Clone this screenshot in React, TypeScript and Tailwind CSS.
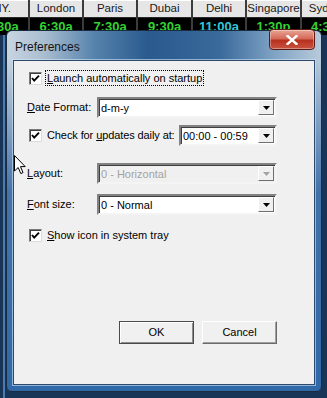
import React from 'react';

interface City {
  name: string;
  time: string;
  tone: 'green' | 'cyan';
  width: number;
}

const CITIES: City[] = [
  { name: 'NY.', time: '1:30a', tone: 'green', width: 52 },
  { name: 'London', time: '6:30a', tone: 'green', width: 52 },
  { name: 'Paris', time: '7:30a', tone: 'green', width: 52 },
  { name: 'Dubai', time: '9:30a', tone: 'green', width: 53 },
  { name: 'Delhi', time: '11:00a', tone: 'cyan', width: 52 },
  { name: 'Singapore', time: '1:30p', tone: 'green', width: 53 },
  { name: 'Sydney', time: '4:30p', tone: 'green', width: 52 },
];

const CheckBox: React.FC = () => (
  <span className="w-[13px] h-[13px] shrink-0 bg-white border border-t-[#7a7a7a] border-l-[#7a7a7a] border-b-[#dcdcdc] border-r-[#dcdcdc] shadow-[inset_1px_1px_0_#3c3c3c] flex items-center justify-center">
    <svg width="11" height="11" viewBox="0 0 11 11">
      <polyline points="2,5 4.2,7.6 9,2.6" fill="none" stroke="#000" strokeWidth="1.9" />
    </svg>
  </span>
);

const Combo: React.FC<{ value: string; width: string; disabled?: boolean }> = ({ value, width, disabled }) => (
  <div
    className={`${width} h-[21px] flex items-stretch border-2 border-t-[#828282] border-l-[#828282] border-b-[#f4f4f4] border-r-[#f4f4f4] shadow-[inset_1px_1px_0_#3f3f3f] ${disabled ? 'bg-[#f0f0f0]' : 'bg-white'}`}
  >
    <span className={`flex-1 pl-[2px] pt-[1px] flex items-center text-[11px] ${disabled ? 'text-[#a3a3a3]' : 'text-black'}`}>{value}</span>
    <span className="w-[16px] my-[1px] mr-[1px] bg-[#f0f0f0] border border-t-white border-l-white border-b-[#707070] border-r-[#707070] flex items-center justify-center">
      <svg width="7" height="4" viewBox="0 0 7 4">
        <polygon points="0,0 7,0 3.5,4" fill={disabled ? '#a3a3a3' : '#000'} />
      </svg>
    </span>
  </div>
);

const Btn: React.FC<{ label: string; isDefault?: boolean }> = ({ label, isDefault }) => (
  <button
    className={`w-[75px] h-[23px] bg-[#f0f0f0] text-[11px] text-black flex items-center justify-center ${
      isDefault
        ? 'border border-[#4a4a4a] shadow-[inset_1px_1px_0_#ffffff,inset_-1px_-1px_0_#8c8c8c]'
        : 'border border-t-white border-l-white border-b-[#6a6a6a] border-r-[#6a6a6a] shadow-[inset_-1px_-1px_0_#a0a0a0]'
    }`}
  >
    {label}
  </button>
);

const App: React.FC = () => {
  return (
    <div className="w-[327px] h-[398px] relative overflow-hidden bg-[#183456] font-['Liberation_Sans',Arial,sans-serif]">
      {/* clock strip behind the dialog */}
      <div className="flex ml-[-24px] bg-[#3c3c3c]">
        {CITIES.map(city => (
          <div key={city.name} className="flex flex-col shrink-0 mr-[2px]" style={{ width: city.width }}>
            <div className="h-[17px] bg-[#e6e6e6] border-t border-white flex items-center justify-center text-[11.5px] text-[#1a1a1a] whitespace-nowrap">
              {city.name}
            </div>
            <div className="h-[1px] bg-[#2a2a2a]" />
            <div
              className={`h-[17px] bg-black flex items-center justify-center text-[13px] font-bold whitespace-nowrap ${
                city.tone === 'cyan' ? 'text-[#36c6d6]' : 'text-[#34d234]'
              }`}
            >
              {city.time}
            </div>
          </div>
        ))}
      </div>

      {/* left background window edge */}
      <div className="absolute left-[3px] top-[35px] w-[2px] h-[363px] bg-[#4c7cae]" />

      {/* Preferences dialog */}
      <div className="absolute left-[6px] top-[30px] w-[316px] h-[362px] rounded-[6px] border border-[#1c2c40] flex flex-col bg-[linear-gradient(180deg,rgba(46,98,160,0)_8%,rgba(46,98,160,0.85)_45%,#2f69a8_100%),linear-gradient(90deg,#c8d5e1_0%,#a9bdd0_12%,#5582ac_28%,#2a5a8e_45%,#3a6a9b_68%,#7fa3c4_85%,#b8cadb_100%)]">
        <div className="h-[29px] relative flex items-center pl-[8px]">
          <span className="text-[12px] text-[#141414] pt-[2px]">Preferences</span>
          <div className="absolute right-[6px] top-[-2px] w-[46px] h-[21px] rounded-[4px] border border-[#5a1a14] bg-[linear-gradient(180deg,#e9a595_0%,#d46a58_45%,#b8301f_55%,#c85440_100%)] flex items-center justify-center shadow-[inset_0_0_0_1px_rgba(255,255,255,0.35)]">
            <svg width="12" height="10" viewBox="0 0 12 10">
              <path d="M1.5 1 L10.5 9 M10.5 1 L1.5 9" stroke="#fff" strokeWidth="2.4" strokeLinecap="square" />
            </svg>
          </div>
        </div>

        <div className="flex-1 mx-[6px] mb-[6px] bg-[#f0f0f0] border border-[#2c4a6e] shadow-[0_0_0_1px_rgba(210,230,245,0.6)] pt-[9px] pl-[13px] text-[11px] text-black">
          <div className="h-[16px] flex items-center">
            <span className="ml-[2px]"><CheckBox /></span>
            <span className="ml-[3px] px-[1px] h-[16px] flex items-center border border-dotted border-black">
              <span className="underline">L</span>aunch automatically on startup
            </span>
          </div>

          <div className="mt-[11px] h-[21px] flex items-center">
            <span className="w-[70px]"><span className="underline">D</span>ate Format:</span>
            <Combo value="d-m-y" width="w-[180px]" />
          </div>

          <div className="mt-[7px] h-[21px] flex items-center">
            <span className="ml-[2px]"><CheckBox /></span>
            <span className="ml-[5px] w-[132px] tracking-[-0.1px]">Check for <span className="underline">u</span>pdates daily at:</span>
            <Combo value="00:00 - 00:59" width="w-[98px]" />
          </div>

          <div className="mt-[17px] h-[21px] flex items-center">
            <span className="w-[70px]"><span className="underline">L</span>ayout:</span>
            <Combo value="0 - Horizontal" width="w-[180px]" disabled />
          </div>

          <div className="mt-[10px] h-[21px] flex items-center">
            <span className="w-[70px]"><span className="underline">F</span>ont size:</span>
            <Combo value="0 - Normal" width="w-[180px]" />
          </div>

          <div className="mt-[12px] h-[16px] flex items-center">
            <span className="ml-[2px]"><CheckBox /></span>
            <span className="ml-[5px]"><span className="underline">S</span>how icon in system tray</span>
          </div>

          <div className="mt-[78px] ml-[92px] flex gap-[8px]">
            <Btn label="OK" isDefault />
            <Btn label="Cancel" />
          </div>
        </div>
      </div>

      {/* mouse pointer */}
      <svg className="absolute left-[14px] top-[155px]" width="12" height="20" viewBox="0 0 12 20">
        <path d="M0.5 0.5 L0.5 16 L4.2 12.5 L6.8 18.6 L9 17.6 L6.5 11.6 L11.2 11.6 Z" fill="#fff" stroke="#000" strokeWidth="1" />
      </svg>
    </div>
  );
};

export default App;
